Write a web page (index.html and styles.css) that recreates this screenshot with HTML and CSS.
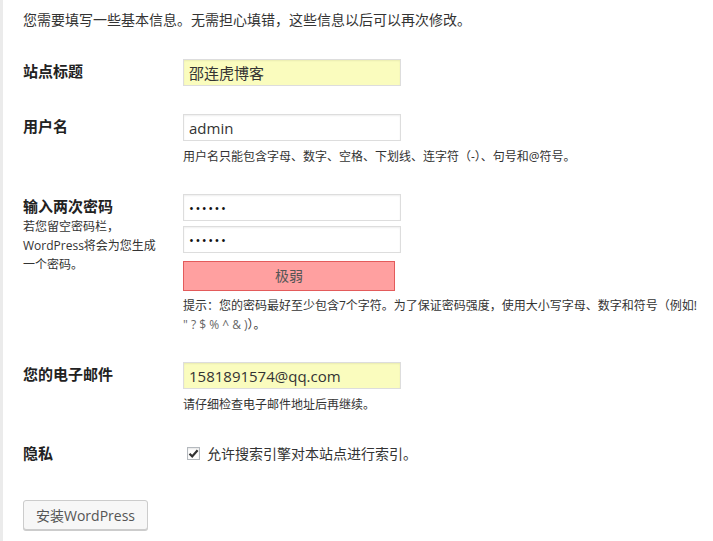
FILE: index.html
```html
<!DOCTYPE html>
<html lang="zh-CN">
<head>
<meta charset="utf-8">
<title>安装WordPress</title>
<link rel="stylesheet" href="styles.css">
</head>
<body>
<div class="page">
  <p class="intro">您需要填写一些基本信息。无需担心填错，这些信息以后可以再次修改。</p>
  <form class="form">
    <div class="row">
      <label class="label" for="t">站点标题</label>
      <div class="field">
        <input id="t" class="input autofill" type="text" value="邵连虎博客">
      </div>
    </div>
    <div class="row">
      <label class="label" for="u">用户名</label>
      <div class="field">
        <input id="u" class="input" type="text" value="admin">
        <p class="hint">用户名只能包含字母、数字、空格、下划线、连字符（-）、句号和@符号。</p>
      </div>
    </div>
    <div class="row">
      <div class="label-col">
        <label class="label" for="p1">输入两次密码</label>
        <p class="label-desc">若您留空密码栏，<br>WordPress将会为您生成<br>一个密码。</p>
      </div>
      <div class="field">
        <input id="p1" class="input pw" type="password" value="aaaaaa">
        <input class="input pw second" type="password" value="aaaaaa">
        <div class="strength">极弱</div>
        <p class="hint hint-pw">提示：您的密码最好至少包含7个字符。为了保证密码强度，使用大小写字母、数字和符号（例如!<br><span class="sym">" ? $ % ^ &amp; )</span>）。</p>
      </div>
    </div>
    <div class="row">
      <label class="label" for="e">您的电子邮件</label>
      <div class="field">
        <input id="e" class="input autofill" type="text" value="1581891574@qq.com">
        <p class="hint">请仔细检查电子邮件地址后再继续。</p>
      </div>
    </div>
    <div class="row row-privacy">
      <div class="label label-flat">隐私</div>
      <div class="field">
        <label class="check">
          <span class="box"><svg width="11" height="11" viewBox="0 0 11 11"><path d="M1.5 5.8 L4.2 8.4 L9.6 2.2" fill="none" stroke="#333" stroke-width="2.2"/></svg></span>
          <span>允许搜索引擎对本站点进行索引。</span>
        </label>
      </div>
    </div>
    <div class="actions">
      <button type="button" class="button">安装WordPress</button>
    </div>
  </form>
</div>
</body>
</html>
```
FILE: styles.css
```css
html, body {
  margin: 0;
  padding: 0;
  background: #fff;
}
body {
  font-family: "Open Sans", "Noto Sans CJK SC", sans-serif;
  color: #333;
}
.page {
  min-height: 541px;
  box-sizing: border-box;
  border-left: 3px solid #ebebeb;
  padding: 8px 0 0 20px;
}
.intro {
  margin: 0;
  font-size: 14px;
  line-height: 24px;
  color: #333;
}
.form {
  margin-top: 13px;
}
.row {
  display: grid;
  grid-template-columns: 160px 1fr;
  padding: 14px 0;
}
.label {
  display: block;
  padding-top: 1px;
  font-size: 15px;
  line-height: 22px;
  font-weight: bold;
  color: #222;
}
.label-flat {
  padding-top: 0;
}
.label-desc {
  margin: 0;
  font-size: 12px;
  line-height: 19px;
  color: #333;
}
.field {
  display: flex;
  flex-direction: column;
  align-items: flex-start;
}
.input {
  box-sizing: border-box;
  width: 218px;
  height: 27px;
  margin: 0;
  padding: 0 5px;
  border: 1px solid #ddd;
  box-shadow: inset 0 1px 2px rgba(0,0,0,0.07);
  background: #fff;
  font-family: "Open Sans", "Noto Sans CJK SC", sans-serif;
  font-size: 15px;
  color: #333;
  outline: none;
}
.autofill {
  background: #fafcbe;
}
.pw {
  font-size: 13px;
  letter-spacing: 1.5px;
  color: #111;
}
.second {
  margin-top: 5px;
}
.strength {
  box-sizing: border-box;
  width: 212px;
  height: 30px;
  margin-top: 8px;
  background: #ffa0a0;
  border: 1px solid #e35b5b;
  text-align: center;
  font-size: 14px;
  line-height: 28px;
  color: #555;
}
.hint {
  margin: 6px 0 0;
  font-size: 12px;
  line-height: 19px;
  color: #333;
}
.hint-pw {
  margin-top: 5px;
}
.sym {
  color: #666;
}
.check {
  display: flex;
  align-items: center;
  height: 22px;
  font-size: 14px;
  color: #333;
}
.box {
  box-sizing: border-box;
  width: 13px;
  height: 13px;
  margin: 0 7px 0 4px;
  border: 1px solid #b4b9be;
  background: #fff;
  box-shadow: inset 0 1px 2px rgba(0,0,0,0.1);
  display: flex;
  align-items: center;
  justify-content: center;
}
.box svg {
  display: block;
}
.actions {
  margin-top: 22px;
}
.button {
  box-sizing: border-box;
  width: 125px;
  height: 30px;
  padding: 0;
  background: #f7f7f7;
  border: 1px solid #ccc;
  border-radius: 3px;
  box-shadow: 0 1px 0 #ccc;
  font-family: "Open Sans", "Noto Sans CJK SC", sans-serif;
  font-size: 14px;
  color: #555;
  cursor: pointer;
}
```
